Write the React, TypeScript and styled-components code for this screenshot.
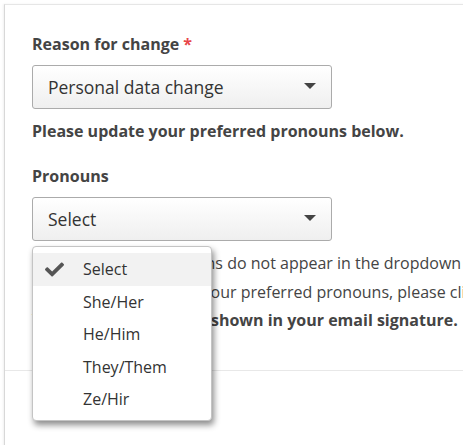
import React from "react";
import styled, { createGlobalStyle } from "styled-components";
import { FaCheck } from "react-icons/fa";

const GlobalStyle = createGlobalStyle`
  html, body {
    margin: 0;
    padding: 0;
    background: #fff;
    overflow: hidden;
  }
  body {
    font-family: "Open Sans", "Noto Sans", sans-serif;
    color: #444;
  }
`;

const pronounOptions = ["Select", "She/Her", "He/Him", "They/Them", "Ze/Hir"];

const App = () => {
  return (
    <>
      <GlobalStyle />
      <Page>
        <Card>
          <Body>
            <Label>
              Reason for change <Required>*</Required>
            </Label>
            <SelectBox>
              <SelectText>Personal data change</SelectText>
              <Caret />
            </SelectBox>
            <Notice>Please update your preferred pronouns below.</Notice>
            <Label $spaced>Pronouns</Label>
            <SelectWrap>
              <SelectBox>
                <SelectText>Select</SelectText>
                <Caret />
              </SelectBox>
              <Menu>
                {pronounOptions.map((opt, i) => (
                  <MenuItem key={opt} $active={i === 0}>
                    <Check>{i === 0 ? <FaCheck size={19} color="#555" /> : null}</Check>
                    {opt}
                  </MenuItem>
                ))}
              </Menu>
            </SelectWrap>
            <Help>
              <HelpLine>If the preferred pronouns do not appear in the dropdown list,</HelpLine>
              <HelpLine>or you wish to remove your preferred pronouns, please click here.</HelpLine>
              <HelpLine>
                <strong>Your pronouns will be shown in your email signature.</strong>
              </HelpLine>
            </Help>
          </Body>
          <Footer />
        </Card>
      </Page>
    </>
  );
};

export default App;

const Page = styled.div`
  padding: 4px 0 0 4px;
  width: 900px;
`;

const Card = styled.div`
  border-top: 1px solid #e6e6e6;
  border-left: 1px solid #d8d8d8;
  box-shadow: -1px 0 2px rgba(0, 0, 0, 0.06);
  background: #fff;
`;

const Body = styled.div`
  padding: 28px 0 35px 27px;
`;

const Label = styled.div<{ $spaced?: boolean }>`
  font-size: 16px;
  line-height: 22px;
  font-weight: 700;
  color: #444;
  margin-top: ${(p) => (p.$spaced ? "23px" : "0")};
  margin-bottom: 10px;
`;

const Required = styled.span`
  color: #e8474a;
`;

const SelectWrap = styled.div`
  position: relative;
`;

const SelectBox = styled.div`
  box-sizing: border-box;
  width: 300px;
  height: 44px;
  border: 1px solid #ababab;
  border-radius: 3px;
  background: linear-gradient(#ffffff, #efefef);
  display: flex;
  align-items: center;
  justify-content: space-between;
  padding: 0 15px 0 15px;
`;

const SelectText = styled.span`
  font-size: 17.5px;
  color: #333;
`;

const Caret = styled.span`
  width: 0;
  height: 0;
  border-left: 6px solid transparent;
  border-right: 6px solid transparent;
  border-top: 6px solid #444;
  margin-top: -2px;
`;

const Notice = styled.div`
  font-size: 16px;
  line-height: 22px;
  font-weight: 700;
  color: #444;
  margin-top: 11px;
`;

const Menu = styled.ul`
  position: absolute;
  top: calc(100% + 5px);
  left: 0;
  z-index: 2;
  box-sizing: border-box;
  width: 180px;
  height: 175px;
  margin: 0;
  padding: 6px 0 0;
  list-style: none;
  background: #fff;
  border: 1px solid #c4c4c4;
  border-radius: 4px;
  box-shadow: 2px 4px 6px rgba(0, 0, 0, 0.45);
`;

const MenuItem = styled.li<{ $active?: boolean }>`
  height: 32.5px;
  display: flex;
  align-items: center;
  font-size: 16px;
  color: #333;
  background: ${(p) => (p.$active ? "#f2f2f2" : "transparent")};
`;

const Check = styled.span`
  width: 50px;
  padding-left: 12px;
  box-sizing: border-box;
  display: flex;
  align-items: center;
`;

const Help = styled.div`
  margin-top: 8px;
  font-size: 16px;
  line-height: 28.5px;
  color: #444;
  white-space: nowrap;
`;

const HelpLine = styled.div``;

const Footer = styled.div`
  border-top: 1px solid #e8e8e8;
  height: 80px;
`;
